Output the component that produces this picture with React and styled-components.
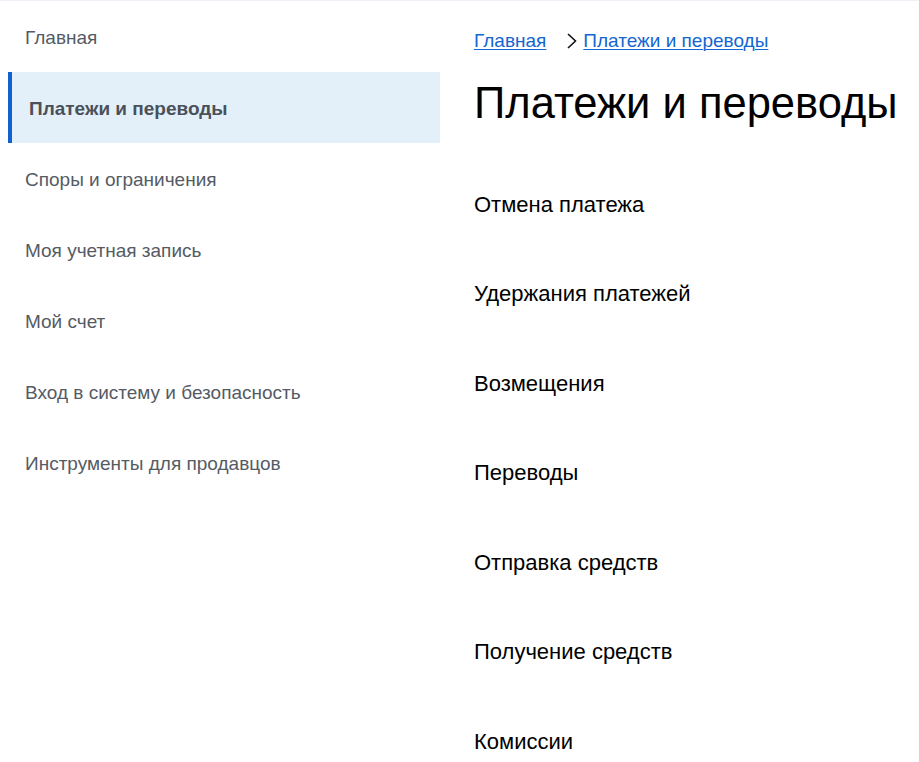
import React from 'react';
import styled, { createGlobalStyle } from 'styled-components';

const GlobalStyle = createGlobalStyle`
    html, body {
        margin: 0;
        padding: 0;
        background: #ffffff;
        font-family: "Liberation Sans", Arial, sans-serif;
    }
    * {
        box-sizing: border-box;
    }
`;

const Page = styled.div`
    display: flex;
    align-items: flex-start;
    border-top: 1px solid #eef1f8;
    min-height: 762px;
`;

const Sidebar = styled.nav`
    width: 432px;
    margin-left: 8px;
    display: flex;
    flex-direction: column;
`;

const SideItem = styled.a`
    height: 71px;
    display: flex;
    align-items: center;
    padding-top: 2px;
    padding-left: ${props => (props.active ? '17px' : '13px')};
    font-size: 19px;
    color: ${props => (props.active ? '#4b5059' : '#555b64')};
    font-weight: ${props => (props.active ? 700 : 400)};
    background: ${props => (props.active ? '#e3f0fa' : 'transparent')};
    border-left: 4px solid ${props => (props.active ? '#1160cf' : 'transparent')};
    text-decoration: none;
    cursor: pointer;
`;

const Main = styled.main`
    margin-left: 34px;
    padding-top: 28px;
    display: flex;
    flex-direction: column;
`;

const Breadcrumbs = styled.div`
    display: flex;
    align-items: center;
    font-size: 19px;
    line-height: 24px;
`;

const Crumb = styled.a`
    color: #1466d1;
    text-decoration: underline;
    text-underline-offset: 2px;
    text-decoration-thickness: 1px;
    cursor: pointer;
`;

const Chevron = styled.svg`
    width: 12px;
    height: 16px;
    margin: 0 5px 0 20px;
`;

const Title = styled.h1`
    margin: 25px 0 0;
    font-size: 43.5px;
    line-height: 50px;
    font-weight: 400;
    color: #000000;
`;

const TopicList = styled.div`
    margin-top: 32px;
    display: flex;
    flex-direction: column;
`;

const Topic = styled.a`
    height: 89.5px;
    display: flex;
    align-items: center;
    font-size: 22px;
    color: #000000;
    text-decoration: none;
    cursor: pointer;
`;

const sideItems = [
    'Главная',
    'Платежи и переводы',
    'Споры и ограничения',
    'Моя учетная запись',
    'Мой счет',
    'Вход в систему и безопасность',
    'Инструменты для продавцов',
];

const topics = [
    'Отмена платежа',
    'Удержания платежей',
    'Возмещения',
    'Переводы',
    'Отправка средств',
    'Получение средств',
    'Комиссии',
];

const App = () => {
    return (
        <>
            <GlobalStyle />
            <Page>
                <Sidebar>
                    {sideItems.map(item => (
                        <SideItem key={item} active={item === 'Платежи и переводы' ? 1 : 0}>
                            {item}
                        </SideItem>
                    ))}
                </Sidebar>
                <Main>
                    <Breadcrumbs>
                        <Crumb>Главная</Crumb>
                        <Chevron viewBox="0 0 12 16">
                            <polyline points="2,1 9.5,8 2,15" fill="none" stroke="#111" strokeWidth="1.6" />
                        </Chevron>
                        <Crumb>Платежи и переводы</Crumb>
                    </Breadcrumbs>
                    <Title>Платежи и переводы</Title>
                    <TopicList>
                        {topics.map(t => (
                            <Topic key={t}>{t}</Topic>
                        ))}
                    </TopicList>
                </Main>
            </Page>
        </>
    );
};

export default App;
